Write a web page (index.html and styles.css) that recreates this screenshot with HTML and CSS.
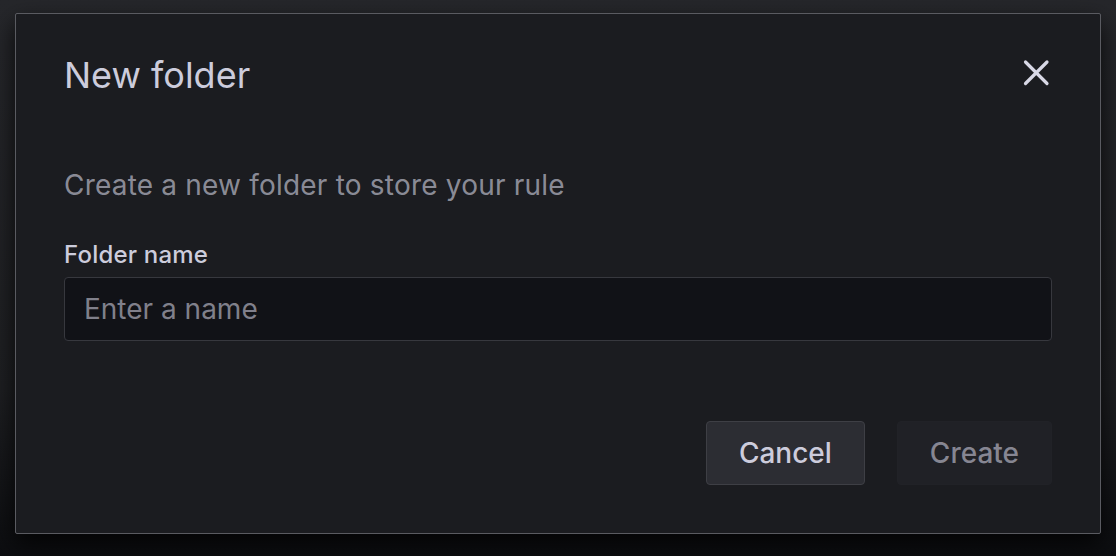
FILE: index.html
```html
<!DOCTYPE html>
<html lang="en">
<head>
<meta charset="utf-8">
<title>New folder</title>
<link rel="stylesheet" href="styles.css">
</head>
<body>
<div class="modal" role="dialog" aria-labelledby="modal-title">
  <div class="modal-header">
    <h2 class="modal-title" id="modal-title">New folder</h2>
    <button class="close-btn" aria-label="Close">
      <svg width="32" height="32" viewBox="0 0 32 32" aria-hidden="true">
        <path d="M5.5 5 L27 26.5 M27 5 L5.5 26.5" stroke="#d8d8e6" stroke-width="3.2" stroke-linecap="round" fill="none"/>
      </svg>
    </button>
  </div>
  <p class="description">Create a new folder to store your rule</p>
  <label class="field-label" for="folder-name">Folder name</label>
  <input class="text-input" id="folder-name" type="text" placeholder="Enter a name">
  <div class="modal-footer">
    <button class="btn btn-secondary">Cancel</button>
    <button class="btn btn-disabled" disabled>Create</button>
  </div>
</div>
</body>
</html>
```

FILE: styles.css
```css
* { box-sizing: border-box; }

html, body {
  margin: 0;
  padding: 0;
}

body {
  width: 1116px;
  height: 556px;
  overflow: hidden;
  background: linear-gradient(180deg, #26272b 0%, #1e1f22 70%, #0c0d10 100%);
  font-family: Inter, "Noto Sans", sans-serif;
  padding: 13px 0 0 15px;
}

.modal {
  width: 1086px;
  height: 521px;
  background: #1b1c20;
  border: 1px solid #5a5b61;
  border-radius: 2px;
  box-shadow: 0 10px 24px rgba(0, 0, 0, 0.8);
  padding: 39px 48px 48px;
  display: flex;
  flex-direction: column;
}

.modal-header {
  display: flex;
  align-items: center;
  justify-content: space-between;
  height: 44px;
}

.modal-title {
  margin: 0;
  font-size: 36px;
  line-height: 44px;
  font-weight: 400;
  color: #ccccdc;
}

.close-btn {
  background: none;
  border: 0;
  padding: 0;
  width: 32px;
  height: 32px;
  margin-right: 0;
  margin-top: -5px;
  cursor: pointer;
  display: flex;
}

.description {
  margin: 68px 0 0;
  font-size: 28px;
  line-height: 40px;
  letter-spacing: 0.2px;
  color: rgba(204, 204, 220, 0.65);
}

.field-label {
  display: block;
  margin-top: 34px;
  font-size: 24px;
  line-height: 32px;
  font-weight: 500;
  letter-spacing: 0.2px;
  color: #ccccdc;
}

.text-input {
  display: block;
  margin-top: 6px;
  width: 988px;
  height: 64px;
  background: #111217;
  border: 1px solid #37383e;
  border-radius: 4px;
  padding: 0 18px 0 19px;
  font-family: inherit;
  font-size: 28px;
  color: #ccccdc;
  outline: none;
}

.text-input::placeholder {
  color: rgba(204, 204, 220, 0.6);
}

.modal-footer {
  margin-top: auto;
  display: flex;
  justify-content: flex-end;
  gap: 32px;
}

.btn {
  height: 64px;
  padding: 0 32px;
  border-radius: 4px;
  font-family: inherit;
  font-size: 28px;
  font-weight: 500;
  line-height: 1;
}

.btn-secondary {
  background: #2c2d33;
  border: 1px solid #3e3f45;
  color: #ccccdc;
}

.btn-disabled {
  background: #202126;
  border: 1px solid #212227;
  color: rgba(204, 204, 220, 0.6);
}
```
